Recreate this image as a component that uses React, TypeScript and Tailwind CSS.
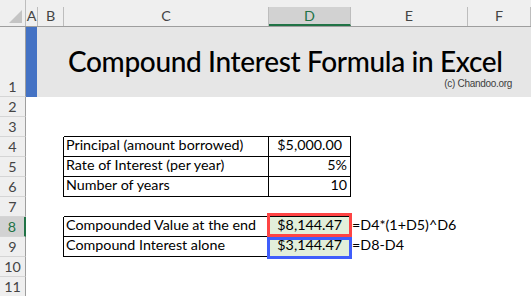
import React from "react";

type Kids = { className?: string; children?: React.ReactNode };

function Cell({ className = "", children }: Kids) {
  return (
    <div className={`h-full shrink-0 leading-[15px] whitespace-nowrap ${className}`}>
      {children}
    </div>
  );
}

function ColHead({ className = "", children }: Kids) {
  return (
    <div
      className={`h-[19px] shrink-0 pt-[1px] text-center leading-[15px] border-r border-r-[#bdbdbd] ${className}`}
    >
      {children}
    </div>
  );
}

function RowHead({ n, selected }: { n: number; selected?: boolean }) {
  return (
    <div
      className={`w-[26px] h-full shrink-0 flex items-end justify-center pb-[2px] leading-[15px] border-b border-b-[#d5d5d5] ${
        selected
          ? "bg-[#d2d2d2] text-[#217346] border-r-2 border-r-[#217346]"
          : "bg-[#efefef] text-[#444444] border-r border-r-[#9e9e9e]"
      }`}
    >
      {n}
    </div>
  );
}

function Row({ n, selected, children }: { n: number; selected?: boolean; children?: React.ReactNode }) {
  return (
    <div className="flex h-[20px]">
      <RowHead n={n} selected={selected} />
      {children}
    </div>
  );
}

const inputs = [
  { label: "Principal (amount borrowed)", value: "$5,000.00", pad: "pr-[8px]" },
  { label: "Rate of Interest (per year)", value: "5%", pad: "pr-[3px]" },
  { label: "Number of years", value: "10", pad: "pr-[3px]" },
];

export default function App() {
  return (
    <div className="w-[531px] h-[296px] overflow-hidden bg-white text-[14.3px] text-black font-['Lato',sans-serif]">
      {/* column letters */}
      <div className="flex items-end h-[27px] bg-[#efefef] border-b border-b-[#9e9e9e] text-[#444444]">
        <div className="w-[26px] h-[26px] shrink-0 border-r border-r-[#bdbdbd] flex items-end justify-end pr-[3px] pb-[3px]">
          <svg width="13" height="13" viewBox="0 0 13 13">
            <polygon points="13,0 13,13 0,13" fill="#c4c4c4" />
          </svg>
        </div>
        <ColHead className="w-[12px]">A</ColHead>
        <ColHead className="w-[26px]">B</ColHead>
        <ColHead className="w-[205px]">C</ColHead>
        <ColHead className="w-[82px] bg-[#d2d2d2] text-[#217346] border-b-2 border-b-[#217346]">D</ColHead>
        <ColHead className="w-[117px]">E</ColHead>
        <ColHead className="w-[63px]">F</ColHead>
      </div>

      {/* title row */}
      <div className="flex h-[70px]">
        <RowHead n={1} />
        <div className="w-[11px] shrink-0 bg-[#4472c4]" />
        <div className="flex-1 min-w-0 overflow-hidden bg-[#e6e6e6] flex flex-col">
          <div className="pl-[31px] pt-[20px] text-[28px] leading-[28px] tracking-[-0.35px] font-medium whitespace-nowrap">
            Compound Interest Formula in Excel
          </div>
          <div className="self-end pr-[19px] mt-[4px] text-[10px] leading-[10px] tracking-[-0.3px] text-[#404040] whitespace-nowrap font-['Liberation_Sans',sans-serif]">
            (c) Chandoo.org
          </div>
        </div>
      </div>

      <Row n={2} />
      <Row n={3}>
        <Cell className="w-[12px]" />
        <Cell className="w-[26px]" />
        <Cell className="w-[205px] border-b border-black" />
        <Cell className="w-[82px] border-b border-black" />
      </Row>

      {inputs.map((r, i) => (
        <Row key={r.label} n={4 + i}>
          <Cell className="w-[12px]" />
          <Cell className="w-[26px] border-r border-black" />
          <Cell className="w-[205px] pl-[2px] border-b border-r border-black">{r.label}</Cell>
          <Cell className={`w-[82px] text-right border-b border-r border-black ${r.pad}`}>{r.value}</Cell>
        </Row>
      ))}

      <Row n={7}>
        <Cell className="w-[12px]" />
        <Cell className="w-[26px]" />
        <Cell className="w-[205px] border-b border-black" />
        <Cell className="w-[82px] border-b border-black" />
      </Row>

      <Row n={8} selected>
        <Cell className="w-[12px]" />
        <Cell className="w-[26px] border-r border-black" />
        <Cell className="w-[205px] pl-[2px] border-b border-r border-black">Compounded Value at the end</Cell>
        <Cell className="w-[82px] relative text-right pr-[8px] bg-[#e2efda] border-b border-r border-black">
          $8,144.47
          <div className="absolute left-[-2px] top-[-4px] w-[85px] h-[24px] border-[3px] border-[#fe4444]" />
        </Cell>
        <Cell className="w-[117px] pl-[1px]">=D4*(1+D5)^D6</Cell>
      </Row>

      <Row n={9}>
        <Cell className="w-[12px]" />
        <Cell className="w-[26px] border-r border-black" />
        <Cell className="w-[205px] pl-[2px] border-b border-r border-black">Compound Interest alone</Cell>
        <Cell className="w-[82px] relative text-right pr-[8px] bg-[#e2efda] border-b border-r border-black">
          $3,144.47
          <div className="absolute left-[-2px] top-0 w-[85px] h-[22px] border-[3px] border-[#3f5efb]" />
        </Cell>
        <Cell className="w-[117px] pl-[1px]">=D8-D4</Cell>
      </Row>

      <Row n={10} />
      <Row n={11} />
    </div>
  );
}
